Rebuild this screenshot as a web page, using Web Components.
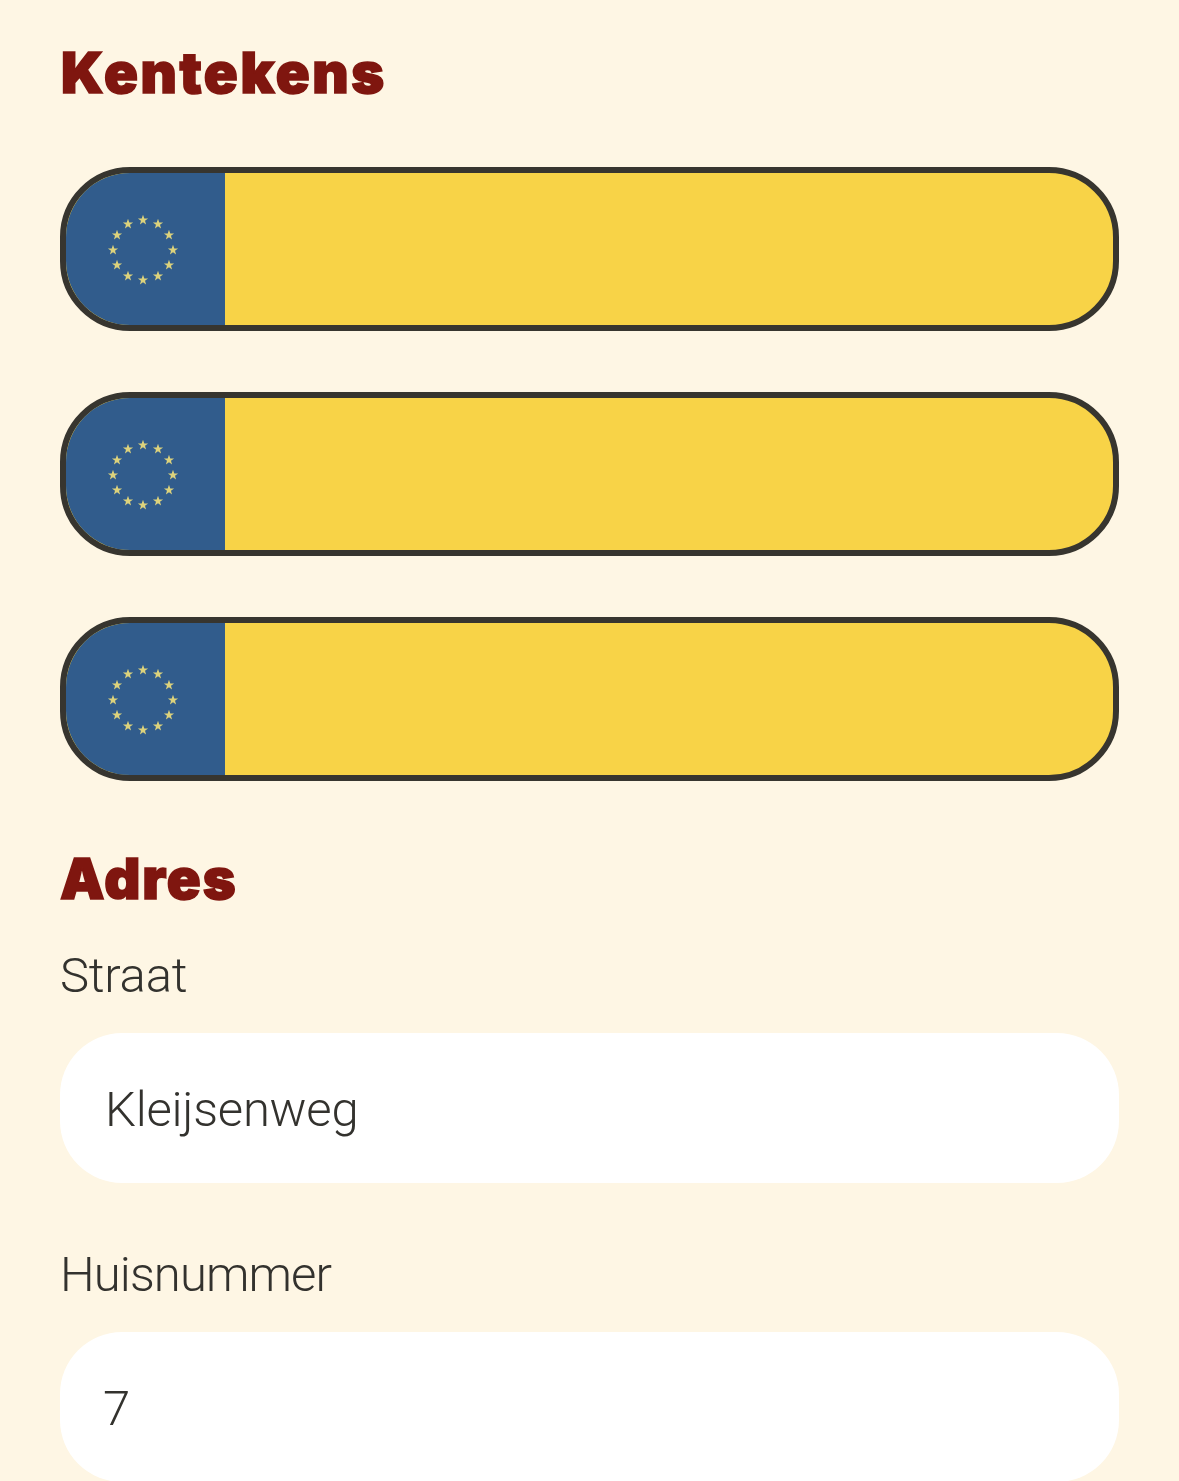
<!DOCTYPE html>
<html lang="nl">
<head>
<meta charset="utf-8">
<title>Kentekens</title>
<style>
  html, body { margin: 0; height: 1481px; overflow: hidden; background: #fef6e4; }
  body { padding: 0 60px 0 60px; box-sizing: border-box; font-family: Roboto, sans-serif; }
</style>
</head>
<body>
<app-heading style="margin-top:40px;letter-spacing:2.6px;padding-left:1px">Kentekens</app-heading>
<license-plate style="margin-top:61px"></license-plate>
<license-plate style="margin-top:61px"></license-plate>
<license-plate style="margin-top:61px"></license-plate>
<app-heading style="margin-top:65px;letter-spacing:2px">Adres</app-heading>
<form-field label="Straat" style="margin-top:34px">Kleijsenweg</form-field>
<form-field label="Huisnummer" style="margin-top:62px;letter-spacing:-.9px;--value-pad:43px">7</form-field>

<script>
class AppHeading extends HTMLElement {
  constructor() {
    super();
    this.attachShadow({ mode: "open" });
    this.shadowRoot.innerHTML = `
      <style>
        :host {
          display: block;
          color: #7f160f;
          font: 900 56px/66px Inter, sans-serif;
          letter-spacing: 2.4px;
          -webkit-text-stroke: 1.6px #7f160f;
        }
      </style>
      <slot></slot>
    `;
  }
}
customElements.define("app-heading", AppHeading);

class LicensePlate extends HTMLElement {
  constructor() {
    super();
    this.attachShadow({ mode: "open" });

    // 12 stars in a ring, like the flag
    let stars = "";
    for (let i = 0; i < 12; i++) {
      const a = i * Math.PI / 6;
      const x = 50 + 30 * Math.sin(a);
      const y = 50 - 30 * Math.cos(a);
      stars += `<use href="#star" x="${x.toFixed(2)}" y="${y.toFixed(2)}"/>`;
    }

    this.shadowRoot.innerHTML = `
      <style>
        :host {
          display: block;
          box-sizing: border-box;
          height: 164px;
          border: 6px solid #37352f;
          border-radius: 70px;
          background: #f8d347;
          overflow: hidden;
        }
        .eu {
          display: flex;
          align-items: center;
          justify-content: center;
          width: 159px;
          height: 100%;
          background: #315c8c;
        }
        svg { width: 100px; height: 100px; display: block; margin-left: -5px; margin-top: 1px; }
      </style>
      <div class="eu">
        <svg viewBox="0 0 100 100" fill="#dcd27c">
          <defs>
            <path id="star" d="M0-5.2 1.3-1.6 5.1-1.6 2 .7 3.1 4.4 0 2.2-3.1 4.4-2 .7-5.1-1.6-1.3-1.6Z"/>
          </defs>
          ${stars}
        </svg>
      </div>
    `;
  }
}
customElements.define("license-plate", LicensePlate);

class FormField extends HTMLElement {
  constructor() {
    super();
    this.attachShadow({ mode: "open" });
    const label = this.getAttribute("label");
    this.shadowRoot.innerHTML = `
      <style>
        :host {
          display: block;
          color: #33322e;
          font: 300 49px/60px Roboto, sans-serif;
          letter-spacing: -.25px;
        }
        .label { height: 60px; }
        .value {
          box-sizing: border-box;
          display: flex;
          align-items: center;
          height: 150px;
          margin-top: 27px;
          padding: 4px var(--value-pad, 45px) 0;
          border-radius: 62px;
          background: #fff;
        }
      </style>
      <div class="label">${label}</div>
      <div class="value"><slot></slot></div>
    `;
  }
}
customElements.define("form-field", FormField);
</script>
</body>
</html>
